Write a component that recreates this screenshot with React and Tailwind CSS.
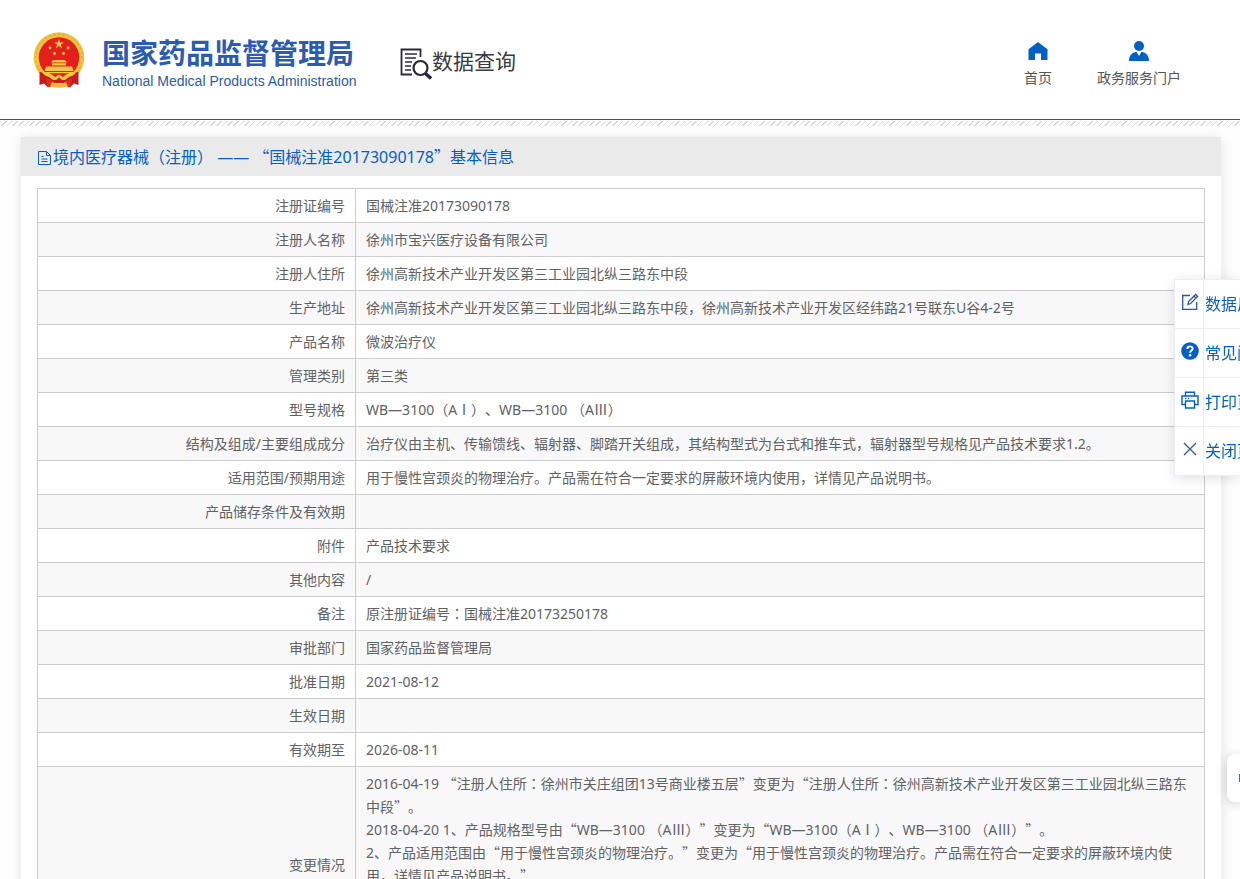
const rows = [
  ["注册证编号", "国械注准20173090178"],
  ["注册人名称", "徐州市宝兴医疗设备有限公司"],
  ["注册人住所", "徐州高新技术产业开发区第三工业园北纵三路东中段"],
  ["生产地址", "徐州高新技术产业开发区第三工业园北纵三路东中段，徐州高新技术产业开发区经纬路21号联东U谷4-2号"],
  ["产品名称", "微波治疗仪"],
  ["管理类别", "第三类"],
  ["型号规格", "WB—3100（AⅠ）、WB—3100 （AⅢ）"],
  ["结构及组成/主要组成成分", "治疗仪由主机、传输馈线、辐射器、脚踏开关组成，其结构型式为台式和推车式，辐射器型号规格见产品技术要求1.2。"],
  ["适用范围/预期用途", "用于慢性宫颈炎的物理治疗。产品需在符合一定要求的屏蔽环境内使用，详情见产品说明书。"],
  ["产品储存条件及有效期", ""],
  ["附件", "产品技术要求"],
  ["其他内容", "/"],
  ["备注", "原注册证编号：国械注准20173250178"],
  ["审批部门", "国家药品监督管理局"],
  ["批准日期", "2021-08-12"],
  ["生效日期", ""],
  ["有效期至", "2026-08-11"],
];

const changes = [
  "2016-04-19 “注册人住所：徐州市关庄组团13号商业楼五层”变更为“注册人住所：徐州高新技术产业开发区第三工业园北纵三路东中段”。",
  "2018-04-20 1、产品规格型号由“WB—3100 （AⅢ）”变更为“WB—3100（AⅠ）、WB—3100 （AⅢ）”。",
  "2、产品适用范围由“用于慢性宫颈炎的物理治疗。”变更为“用于慢性宫颈炎的物理治疗。产品需在符合一定要求的屏蔽环境内使用，详情见产品说明书。”",
];

// curly quotes are full width, colons sit in the middle of their cell
function Text({ children }) {
  return children.split(/([“”：])/).map((part, i) => {
    if (part === "“" || part === "”") {
      return <span key={i} className="font-['Noto_Sans_CJK_SC',sans-serif] leading-none">{part}</span>;
    }
    if (part === "：") {
      return <span key={i} lang="zh-TW" className="font-['Noto_Sans_CJK_TC',sans-serif] leading-none">{part}</span>;
    }
    return part;
  });
}

function Emblem() {
  return (
    <svg viewBox="0 0 52 56" className="h-14 w-[52px]" aria-hidden="true">
      <defs>
        <linearGradient id="gold" x1="0" y1="0" x2="0" y2="1">
          <stop offset="0" stopColor="#f0c040" />
          <stop offset="0.6" stopColor="#f2c53f" />
          <stop offset="1" stopColor="#e8b02c" />
        </linearGradient>
      </defs>
      <ellipse cx="26" cy="25.500" rx="25.300" ry="25.300" fill="url(#gold)" />
      <ellipse cx="26" cy="25.500" rx="23.300" ry="23.300" fill="none" stroke="#d9a22e" strokeWidth="1" strokeDasharray="2 2.500" />
      <ellipse cx="26" cy="25.500" rx="20.300" ry="20.300" fill="#e3201b" />
      <path d="M26 7l1.200 3.500h3.700l-3 2.200 1.100 3.500-3-2.100-3 2.100 1.100-3.500-3-2.200h3.700z" fill="#f0c646" />
      <g fill="#f2c543">
        <circle cx="17" cy="16" r="1.400" />
        <circle cx="35" cy="16" r="1.400" />
        <circle cx="21.500" cy="21.500" r="1.400" />
        <circle cx="30.500" cy="21.500" r="1.400" />
        <path d="M20 28h12l2 2.500H18zM19 31.200h14v2.300H19zM13 34.500h26l1.500 4.500h-29zM9 40h34v1.200H9z" />
      </g>
      <path d="M6.500 40l9 1.500 4.500 3h12l4.500-3 9-1.500v13l-4.500-1.500-4 4L33 51H19l-4 4.500-4-4L6.500 53z" fill="#c91a17" />
      <path d="M9 40q8 0 13 5l4-2.500 4 2.500q5-5 13-5-2 4-7 5l-4 3h-3l-3-2.500-3 2.500h-3l-4-3q-5-1-7-5z" fill="#f2c543" />
      <path d="M13 46l5 1.500 3 3-4 5-3-2zM39 46l-5 1.500-3 3 4 5 3-2z" fill="#de2a1e" />
      <path d="M19 50q7 3 14 0l2 4.500q-9 2.500-18 0z" fill="#eebb35" />
    </svg>
  );
}

function SearchDocIcon() {
  return (
    <svg viewBox="0 0 32 32" className="h-8 w-8" fill="none" stroke="#2b2a38" aria-hidden="true">
      <path d="M20.500 9V1.500H1.500v25H12" strokeWidth="1.800" />
      <path d="M5 6h12M5 10h11M5 14h7M5 18h6M5 22h6" strokeWidth="1.500" />
      <circle cx="20.500" cy="20" r="7" strokeWidth="2.200" />
      <path d="M25.500 25.500l5.500 5" strokeWidth="3.500" />
    </svg>
  );
}

function HomeIcon() {
  return (
    <svg viewBox="0 0 20 20" className="size-5" fill="#0560c4" aria-hidden="true">
      <path d="M10 1l9.500 7.300V19H13v-6.500H7V19H.5V8.300z" />
    </svg>
  );
}

function PersonIcon() {
  return (
    <svg viewBox="0 0 20 20" className="size-5" fill="#0560c4" aria-hidden="true">
      <circle cx="10" cy="5" r="5" />
      <path d="M0 20c0-5 2.500-8.500 7.500-9.300L10 15l2.500-4.300C17.500 11.500 20 15 20 20z" />
    </svg>
  );
}

function DocIcon() {
  return (
    <svg viewBox="0 0 16 16" className="size-4" fill="none" stroke="currentColor" aria-hidden="true">
      <path d="M1.500 1.500h8l4 4v9h-12zM9.500 1.500v4h4M4.500 6.500h2M4.500 9h6M4.500 11.500h6" />
    </svg>
  );
}

const tools = [
  {
    label: "数据反馈",
    icon: (
      <svg viewBox="0 0 18 18" className="size-[18px]" fill="none" stroke="#2b57b0" strokeWidth="1.300">
        <path d="M9 2.500H1.700v13.800h14V9" />
        <path d="M7 11.500l.6-3 7-7 2 2-7 7zM13 3l2 2" />
      </svg>
    ),
  },
  {
    label: "常见问题",
    icon: (
      <svg viewBox="0 0 18 18" className="size-[18px]">
        <circle cx="9" cy="9" r="8.800" fill="#0560c4" />
        <path d="M6.300 7c0-3.600 5.400-3.400 5.400-.3 0 1.900-2.600 1.900-2.600 4" fill="none" stroke="#fff" strokeWidth="1.900" />
        <circle cx="9.100" cy="13.300" r="1.200" fill="#fff" />
      </svg>
    ),
  },
  {
    label: "打印页面",
    icon: (
      <svg viewBox="0 0 18 18" className="size-[18px]" fill="none" stroke="#0560c4" strokeWidth="1.400">
        <path d="M4.500 5V1.200h9V5M4.500 13.500H1V5h16v8.500h-3.500" />
        <path d="M4.500 10h9v7h-9zM4 7.500h1.500M7 7.500h1" />
      </svg>
    ),
  },
  {
    label: "关闭页面",
    icon: (
      <svg viewBox="0 0 18 18" className="size-[18px]" fill="none" stroke="#2b57b0" strokeWidth="1.300">
        <path d="M3 3l12 12M15 3L3 15" />
      </svg>
    ),
  },
];

function Header() {
  return (
    <header>
      <div className="flex h-30 items-start justify-between border-b border-[#0a5cb0] bg-white pr-[59px] pl-[33px]">
        <div className="flex">
          <div className="flex gap-[17px] pt-8">
            <Emblem />
            <div className="w-[260px] whitespace-nowrap text-[#2b5cb0]">
              <h1 className="pt-0.5 font-['Noto_Sans_CJK_SC',sans-serif] text-[28px] leading-9 font-bold">国家药品监督管理局</h1>
              <p className="font-['Liberation_Sans',sans-serif] text-sm leading-[22px]">National Medical Products Administration</p>
            </div>
          </div>
          <div className="ml-[38px] flex pt-12">
            <SearchDocIcon />
            <span className="-mt-1.5 font-['Noto_Sans_CJK_SC',sans-serif] text-[21px] leading-9 text-[#3a3a40]">数据查询</span>
          </div>
        </div>
        <nav className="flex gap-[45px] pt-[41px] text-sm text-[#555]">
          <a href="#" className="flex flex-col items-center gap-[7px]">
            <HomeIcon />
            首页
          </a>
          <a href="#" className="flex flex-col items-center gap-[7px]">
            <PersonIcon />
            政务服务门户
          </a>
        </nav>
      </div>
      <div className="mt-px h-[5px] bg-[repeating-linear-gradient(135deg,#d8d8d8_0,#d8d8d8_1px,transparent_1px,transparent_4px)]" />
    </header>
  );
}

export default function App() {
  return (
    <div className="min-h-screen overflow-x-hidden bg-[#fefefe] font-['Noto_Sans','Noto_Sans_CJK_SC',sans-serif] text-[#606266] [text-spacing-trim:space-all]">
      <Header />

      <main className="mt-[11px] mr-[19px] ml-[21px] bg-white shadow-[0_2px_12px_rgba(0,0,0,0.12)]">
        <h2 className="flex h-[39px] items-center bg-[#eaeaea] px-4 pt-0.5 text-base leading-[23px] text-[#0560c4]">
          <DocIcon />
          <span>
            <Text>境内医疗器械（注册） —— “国械注准20173090178”基本信息</Text>
          </span>
        </h2>
        <div className="px-4 pt-3 pb-4">
          <table className="w-full border-collapse border border-[#ccc] text-sm leading-[23px]">
            <tbody>
              {rows.map(([label, value]) => (
                <tr key={label} className="h-[34px] even:bg-[#f8f8f8]">
                  <th scope="row" className="w-[318px] border border-[#ccc] px-2.5 py-[5px] text-right font-normal">{label}</th>
                  <td className="border border-[#ccc] px-2.5 py-[5px]">
                    <Text>{value}</Text>
                  </td>
                </tr>
              ))}
              <tr className="h-[196px] bg-[#f8f8f8]">
                <th scope="row" className="border border-[#ccc] px-2.5 py-[5px] text-right font-normal">变更情况</th>
                <td className="border border-[#ccc] px-2.5 py-[5px] align-top">
                  {changes.map((line) => (
                    <p key={line}>
                      <Text>{line}</Text>
                    </p>
                  ))}
                </td>
              </tr>
            </tbody>
          </table>
        </div>
      </main>

      {/* 右侧工具栏 */}
      <aside className="fixed top-[279px] right-0 w-[66px] overflow-hidden border border-r-0 border-[#ebeef5] bg-white shadow-[0_2px_12px_rgba(0,0,0,0.12)]">
        {tools.map((tool) => (
          <button key={tool.label} type="button" className="flex h-[49px] w-full border-b border-[#ebeef5] text-base whitespace-nowrap text-[#0560c4] last:h-12 last:border-b-0">
            <span className="flex h-full w-[29px] shrink-0 items-start border-r border-[#ebeef5] pt-[13px] pl-1.5">{tool.icon}</span>
            <span className="pl-px leading-[49px]">{tool.label}</span>
          </button>
        ))}
      </aside>

      <button type="button" aria-label="客服" className="fixed top-[754px] right-0 flex h-12 w-[13px] items-center justify-end rounded-l-lg bg-white shadow-[0_2px_12px_rgba(0,0,0,0.2)]">
        <span className="h-2 w-px bg-[#2b6fd0]" />
      </button>
    </div>
  );
}
